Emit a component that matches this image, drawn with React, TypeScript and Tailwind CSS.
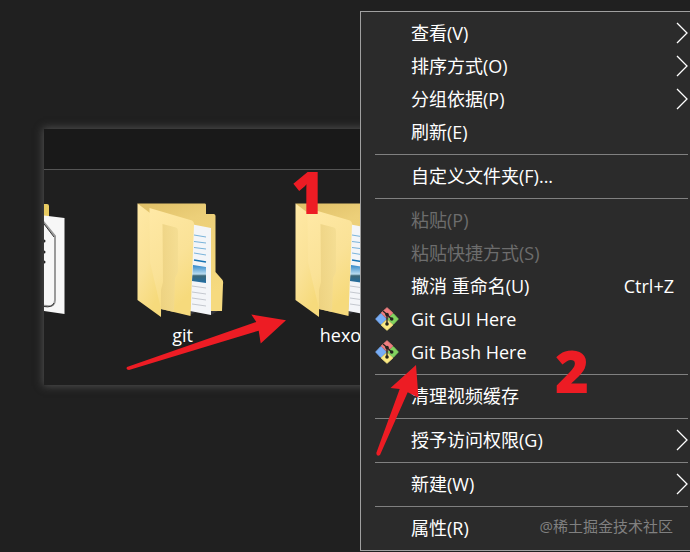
import React from "react";

const UI_FONT = "font-['Open_Sans','Noto_Sans_CJK_SC',sans-serif]";

function GitLogo() {
  return (
    <svg viewBox="0 0 24 24" className="size-6" aria-hidden="true">
      <path d="M12 0.7 L17.8 6 L12 11.5 L6.2 6 Z" fill="#f07f80" stroke="#f07f80" strokeLinejoin="round" />
      <path d="M5.7 6.7 L11.3 12 L5.7 17.3 L0.7 12 Z" fill="#78adf5" stroke="#78adf5" strokeLinejoin="round" />
      <path d="M18.3 6.7 L23.3 12 L18.3 17.3 L12.7 12 Z" fill="#83d35f" stroke="#83d35f" strokeLinejoin="round" />
      <path d="M12 12.5 L17.8 18 L12 23.3 L6.2 18 Z" fill="#fbea83" stroke="#fbea83" strokeLinejoin="round" />
      <path d="M8 4 L12 7.6 V17 M12.500 8 L16.500 12" fill="none" stroke="#23231f" strokeWidth="1.3" />
      <circle cx="12" cy="7.6" r="1.8" fill="#23231f" />
      <circle cx="12" cy="17" r="1.8" fill="#23231f" />
      <circle cx="16.7" cy="12" r="1.8" fill="#23231f" />
    </svg>
  );
}

function FolderIcon({ id }: { id: string }) {
  return (
    <svg viewBox="0 0 90 116" className="h-[116px] w-[90px]" aria-hidden="true">
      <defs>
        <linearGradient id={`${id}-back`} x1="0" y1="0" x2="0.3" y2="1">
          <stop offset="0" stopColor="#dfbf66" />
          <stop offset="0.3" stopColor="#eccf79" />
          <stop offset="1" stopColor="#f6da7f" />
        </linearGradient>
        <linearGradient id={`${id}-front`} x1="0" y1="0" x2="0.4" y2="1">
          <stop offset="0" stopColor="#ffe9a6" />
          <stop offset="0.6" stopColor="#fae297" />
          <stop offset="1" stopColor="#f6da7c" />
        </linearGradient>
        <linearGradient id={`${id}-fold`} x1="0" y1="0" x2="1" y2="0">
          <stop offset="0" stopColor="#ebd080" />
          <stop offset="1" stopColor="#f3dc91" />
        </linearGradient>
        <linearGradient id={`${id}-photo`} x1="0" y1="0" x2="0" y2="1">
          <stop offset="0" stopColor="#2f86c8" />
          <stop offset="0.5" stopColor="#b9dcf0" />
          <stop offset="0.6" stopColor="#3d6878" />
          <stop offset="1" stopColor="#1f6da4" />
        </linearGradient>
      </defs>
      <path d="M25 107 L54 113 L60 110 L75 113 L82 109 L60 104 Z" fill="#34343a" />
      <path d="M1.5 1.5 H69 Q70 1.5 70 3 V12 H78 Q79.5 12.5 79.5 14 V70 L86.5 78 Q87.5 80 87 82 L86 109 H70 Z" fill={`url(#${id}-back)`} />
      <path d="M57 22.5 L75 26 V113 L54 109 Z" fill="#f3f5f8" />
      <path d="M58 33 L70 35 M58 39.5 L70 41 M58 45.5 L70 47 M58 51 L70 53" stroke="#79b3da" fill="none" />
      <path d="M58 58 L70 60" stroke="#1874b4" strokeWidth="1.5" />
      <path d="M57 63 L70 65 V81 L56 79 Z" fill={`url(#${id}-photo)`} />
      <path d="M56 84 L70 86 M56 90 L70 92 M56 96 L70 98 M56 102 L70 104" stroke="#c4c8cf" fill="none" />
      <path d="M1.5 1.5 L14 11 L26 18 L25 115 L1.5 98 Z" fill={`url(#${id}-front)`} />
      <path d="M13.5 6 L56 18.5 Q58.5 20 58 23 L54.5 114 L25 107 L14 60 Z" fill={`url(#${id}-front)`} />
      <path d="M26.5 22 L40 25.5 Q42 26 42 29 V70 L39 76 L38 110 L25 107 V88 L27 80 Z" fill={`url(#${id}-fold)`} opacity="0.8" />
    </svg>
  );
}

function ScriptFolderIcon() {
  return (
    <svg viewBox="0 0 90 116" className="h-[116px] w-[90px]" aria-hidden="true">
      <path d="M1 2 H69 Q71 2 71 4 V20 H1 Z" fill="#e8cb62" />
      <path d="M30 9 L86.5 16 V112 L30 104 Z" fill="#f7f7f7" />
      <path d="M63 17 L77 34 V98 Q77 105 69 104 L40 101" fill="none" stroke="#9a9a9a" strokeWidth="2" />
      <path d="M63 18 L76 35 M76 101 Q74 106 66 104.500" fill="none" stroke="#333" />
      <g fill="#222">
        <circle cx="66" cy="39" r="1.5" />
        <circle cx="66" cy="50" r="1.5" />
        <circle cx="66" cy="60" r="1.5" />
      </g>
    </svg>
  );
}

function FileTile({ name, children }: { name: string; children: React.ReactNode }) {
  return (
    <figure className="flex w-[158px] shrink-0 flex-col items-center gap-[5px]">
      {children}
      <figcaption className="h-6 pl-[3px] text-lg leading-6 text-white">{name}</figcaption>
    </figure>
  );
}

type Entry = {
  label: string;
  submenu?: boolean;
  disabled?: boolean;
  shortcut?: string;
  git?: boolean;
};

const groups: Entry[][] = [
  [
    { label: "查看(V)", submenu: true },
    { label: "排序方式(O)", submenu: true },
    { label: "分组依据(P)", submenu: true },
    { label: "刷新(E)" },
  ],
  [{ label: "自定义文件夹(F)..." }],
  [
    { label: "粘贴(P)", disabled: true },
    { label: "粘贴快捷方式(S)", disabled: true },
    { label: "撤消 重命名(U)", shortcut: "Ctrl+Z" },
    { label: "Git GUI Here", git: true },
    { label: "Git Bash Here", git: true },
  ],
  [{ label: "清理视频缓存" }],
  [{ label: "授予访问权限(G)", submenu: true }],
  [{ label: "新建(W)", submenu: true }],
  [{ label: "属性(R)" }],
];

function MenuRow({ entry }: { entry: Entry }) {
  return (
    <button
      type="button"
      role="menuitem"
      disabled={entry.disabled}
      className="flex h-[33px] w-full items-center pr-[2px] pb-[2px] pl-[14px] text-left text-lg text-white disabled:text-[#6d6d6d]"
    >
      <span className="w-9 shrink-0">{entry.git && <GitLogo />}</span>
      <span className="grow whitespace-nowrap">{entry.label}</span>
      {entry.shortcut && <span className="pr-[14px]">{entry.shortcut}</span>}
      {entry.submenu && (
        <svg viewBox="0 0 12 22" className="h-[22px] w-3" aria-hidden="true">
          <path d="M1 1 L11 11 L1 21" fill="none" stroke="#fff" strokeWidth="1.3" />
        </svg>
      )}
    </button>
  );
}

export default function App() {
  return (
    <main className={`relative min-h-[552px] overflow-hidden bg-[#202020] pt-[129px] pl-11 ${UI_FONT}`}>
      <section className="h-64 overflow-hidden bg-[#1f1f1f] shadow-[0_0_8px_1px_#505050]">
        <header className="h-[41px] border-b border-[#555] bg-[#191919]" />
        <div className="-ml-[100px] flex pt-8">
          <FileTile name="">
            <ScriptFolderIcon />
          </FileTile>
          <FileTile name="git">
            <FolderIcon id="git" />
          </FileTile>
          <FileTile name="hexo">
            <FolderIcon id="hexo" />
          </FileTile>
        </div>
      </section>

      <div
        role="menu"
        className="absolute top-[11px] right-0 left-[360px] border border-r-0 border-[#a0a0a0] bg-[#2b2b2b] py-[5px]"
      >
        {groups.map((group, index) => (
          <React.Fragment key={index}>
            {index > 0 && <hr className="my-[5px] mr-[2px] ml-[14px] border-[#808080]" />}
            {group.map((entry) => (
              <MenuRow key={entry.label} entry={entry} />
            ))}
          </React.Fragment>
        ))}
      </div>

      <svg
        viewBox="120 300 310 160"
        className="pointer-events-none absolute top-[300px] left-[120px] h-[160px] w-[310px] fill-[#ed1c24]"
        aria-hidden="true"
      >
        <path d="M127 367 L256.3 322 L251.3 314.5 L286 320.3 L260.7 343.5 L258.7 330.7 L129 370 Q125.5 370 127 367 Z" />
        <path d="M376.3 453 L399.7 389 L390.5 388 L416 365 L418.5 397.7 L407.7 392.3 L380 455 Q376.5 457 376.3 453 Z" />
      </svg>
      <span className="absolute top-[163px] left-[291px] text-[58px] leading-[58px] font-extrabold text-[#ed1c24]">1</span>
      <span className="absolute top-[342px] left-[555px] text-[58px] leading-[58px] font-extrabold text-[#ed1c24]">2</span>
      <span className="absolute top-[514px] right-[17px] text-[15px] leading-6 text-[#808080]">@稀土掘金技术社区</span>
    </main>
  );
}
